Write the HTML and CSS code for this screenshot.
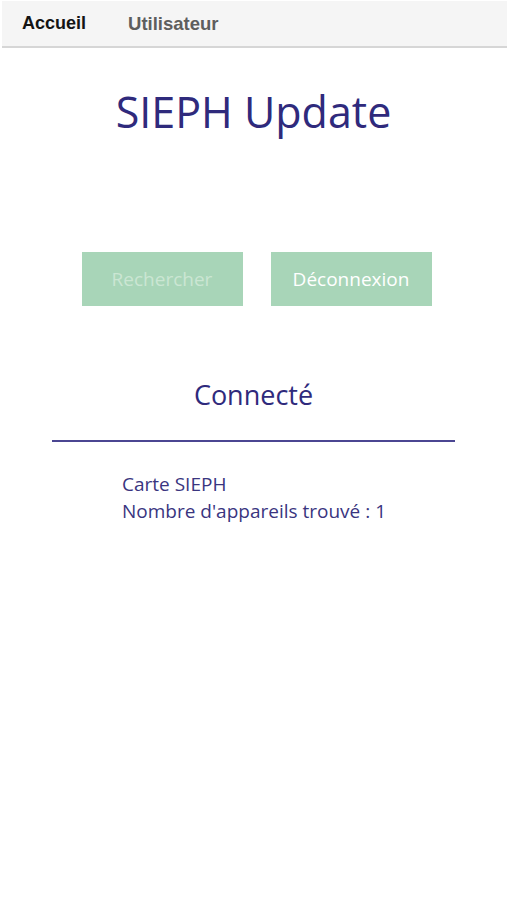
FILE: index.html
```html
<!DOCTYPE html>
<html>
<head lang="fr">
	<meta charset="UTF-8">
	<title>SIEPH Update</title>
	<link rel="stylesheet" href="styles.css">
</head>
<body>
	<div class="tabs">
		<a class="tab active">Accueil</a>
		<a class="tab">Utilisateur</a>
	</div>
	<div class="main">
		<h1>SIEPH Update</h1>
		<div class="btns">
			<button class="btn disabled">Rechercher</button>
			<button class="btn">Déconnexion</button>
		</div>
		<h2>Connecté</h2>
		<div class="sep"></div>
		<ul class="devices">
			<li>Carte SIEPH</li>
			<li>Nombre d'appareils trouvé : 1</li>
		</ul>
	</div>
</body>
</html>
```

FILE: styles.css
```css
*{
	margin:0;
	padding:0;
}
body{
	background:#fff;
	font-family:"Open Sans", "Noto Sans", sans-serif;
	color:#2f2a7c;
}
.tabs{
	display:flex;
	align-items:center;
	height:45px;
	margin:1px 0 0 2px;
	background:#f5f5f5;
	border-bottom:2px solid #d6d6d6;
	padding-left:20px;
	gap:42px;
}
.tab{
	font-family:"Liberation Sans", Arial, sans-serif;
	font-size:18px;
	font-weight:bold;
	color:#5e5e5e;
}
.tab.active{
	color:#141414;
}
.tab + .tab{
	font-size:18.5px;
}
.main{
	display:flex;
	flex-direction:column;
	align-items:center;
}
h1{
	font-weight:normal;
	font-size:43px;
	line-height:58px;
	margin-top:35px;
	color:#2f2a7c;
}
.btns{
	display:flex;
	gap:28px;
	margin-top:111px;
	margin-left:6px;
}
.btn{
	width:161px;
	height:54px;
	border:none;
	background:#a8d5b8;
	font-family:"Open Sans", "Noto Sans", sans-serif;
	font-size:19px;
	color:#fff;
}
.btn.disabled{
	color:#cbe6d3;
}
h2{
	font-weight:normal;
	font-size:27px;
	line-height:36px;
	margin-top:71px;
	color:#2f2a7c;
}
.sep{
	width:403px;
	height:2px;
	background:#4b4692;
	margin-top:27px;
}
.devices{
	list-style:none;
	align-self:flex-start;
	margin:29px 0 0 122px;
	font-size:19px;
	line-height:27px;
	color:#3a357f;
}
```
